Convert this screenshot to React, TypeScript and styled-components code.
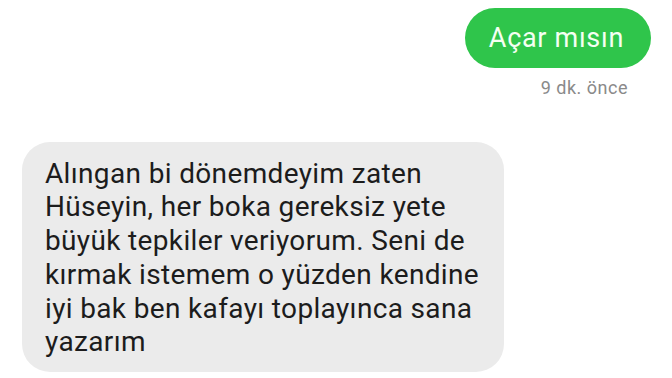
import * as React from "react";
import styled, { createGlobalStyle } from "styled-components";

const GlobalStyle = createGlobalStyle`
  html, body {
    margin: 0;
    padding: 0;
    background: #ffffff;
  }
  body {
    font-family: Roboto, "Noto Sans", Arial, sans-serif;
  }
`;

const Screen = styled.div`
  width: 672px;
  height: 378px;
  overflow: hidden;
  display: flex;
  flex-direction: column;
  box-sizing: border-box;
  padding: 8px 21px 0 22px;
  background: #ffffff;
`;

const Outgoing = styled.div`
  display: flex;
  flex-direction: column;
  align-items: flex-end;
`;

const Bubble = styled.div<{ mine?: boolean }>`
  box-sizing: border-box;
  font-family: Roboto, "Noto Sans", Arial, sans-serif;
  ${({ mine }) =>
    mine
      ? `
    background: #2fc54b;
    color: #f4fff2;
    border-radius: 30px;
    height: 60px;
    padding: 0 27px 0 24px;
    font-size: 27px;
    letter-spacing: 0.7px;
    line-height: 60px;
  `
      : `
    background: #ebebeb;
    color: #1c1c1c;
    border-radius: 28px;
    width: 482px;
    padding: 14.5px 20px 12.7px 23px;
    font-size: 28px;
    letter-spacing: 0.35px;
    line-height: 33.8px;
  `}
`;

const Time = styled.div`
  margin-top: 9px;
  margin-right: 23px;
  font-size: 18px;
  letter-spacing: 0.5px;
  color: #8a8a8a;
  line-height: 22px;
`;

const Incoming = styled.div`
  margin-top: 43px;
  display: flex;
`;

export default function App() {
  return (
    <>
      <GlobalStyle />
      <Screen>
        <Outgoing>
          <Bubble mine>Açar mısın</Bubble>
          <Time>9 dk. önce</Time>
        </Outgoing>
        <Incoming>
          <Bubble>
            Alıngan bi dönemdeyim zaten
            <br />
            Hüseyin, her boka gereksiz yete
            <br />
            büyük tepkiler veriyorum. Seni de
            <br />
            kırmak istemem o yüzden kendine
            <br />
            iyi bak ben kafayı toplayınca sana
            <br />
            yazarım
          </Bubble>
        </Incoming>
      </Screen>
    </>
  );
}
